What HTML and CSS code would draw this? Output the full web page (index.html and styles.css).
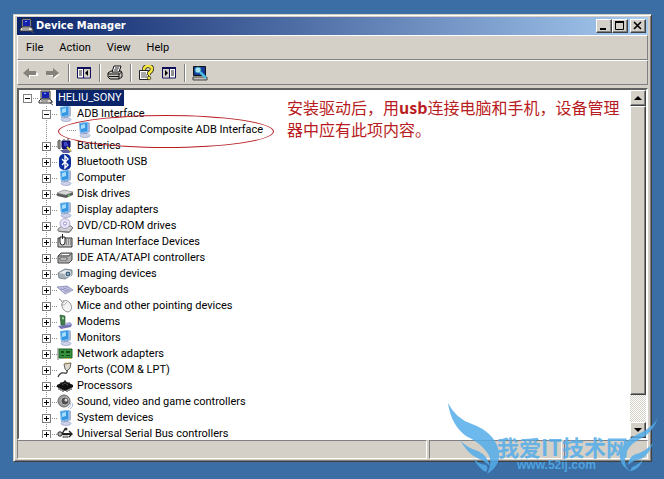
FILE: index.html
```html
<!DOCTYPE html>
<html lang="en">
<head>
    <meta charset="UTF-8">
    <title>Device Manager</title>
    <link rel="stylesheet" href="styles.css">
</head>
<body>
    <!-- icons -->
    <svg class="sprite">
        <symbol id="i-pc" viewBox="0 0 16 16">
            <path d="M3 1h9v8H3z" fill="#d4d0c8" stroke="#333"/>
            <path d="M4 2h7v6H4z" fill="#1420b0"/>
            <path d="M6 3h2v1H6z" fill="#7fb0ff"/>
            <path d="M1 11l2-2h9l2 2v2H1z" fill="#e4e0d8" stroke="#333"/>
            <path d="M3 11h7" stroke="#666"/>
            <path d="M12 9l2 3-2 1 3 2" stroke="#555" fill="none"/>
        </symbol>
        <symbol id="i-monitor" viewBox="0 0 16 16">
            <path d="M3 1l9-1 2 1v9l-2 1-8 1z" fill="#a9b6d6"/>
            <path d="M3 1l9-1v10l-8 1z" fill="#6fb8f0"/>
            <path d="M4 2l7-1v8l-6 1z" fill="#3596e4"/>
            <path d="M5 3l4-1v4l-4 1z" fill="#a5dcff"/>
            <path d="M7 11h4v2H7z" fill="#8793bd"/>
            <ellipse cx="9" cy="13.500" rx="5" ry="2" fill="#ccd3ea" stroke="#8d99bd" stroke-width=".6"/>
        </symbol>
        <symbol id="i-battery" viewBox="0 0 16 16">
            <path d="M1 3l2-1v9l-2-1z" fill="#aaa" stroke="#555"/>
            <path d="M5 3h8v6l-2 2H6L5 9z" fill="#16168c" stroke="#080850"/>
            <path d="M7 1v2M11 0v3" stroke="#777" stroke-width="1.400"/>
            <path d="M3 12h10l2 1-3 2H6z" fill="#5b5ba0"/>
            <path d="M10 9l4 4" stroke="#e0d048" stroke-width="2"/>
            <path d="M7 5h3M7 7h4" stroke="#6b7fff"/>
        </symbol>
        <symbol id="i-bluetooth" viewBox="0 0 16 16">
            <rect x="2" y="0" width="12" height="16" rx="5" fill="#0a2f9c"/>
            <path d="M5 5l6 6-3 3V2l3 3-6 6" fill="none" stroke="#fff" stroke-width="1.400"/>
        </symbol>
        <symbol id="i-disk" viewBox="0 0 16 16">
            <path d="M0 7l7-3 9 2v3l-7 3-9-2z" fill="#5c5c5c"/>
            <path d="M0 7l7-3 9 2-7 3z" fill="#d8d8d8" stroke="#888" stroke-width=".5"/>
            <path d="M11 10l2-1" stroke="#5f5"/>
        </symbol>
        <symbol id="i-dvd" viewBox="0 0 16 16">
            <path d="M1 11l4-3h9l2 2-4 4-11-1z" fill="#d0d0d4" stroke="#777"/>
            <path d="M2 13l10 1 3-4v2l-3 3-10-1z" fill="#777"/>
            <circle cx="8" cy="5.500" r="5" fill="#e5e2f6" stroke="#9690b8" stroke-width=".7"/>
            <circle cx="8" cy="5.500" r="1.500" fill="#fff" stroke="#8a7fc0" stroke-width=".8"/>
        </symbol>
        <symbol id="i-hid" viewBox="0 0 16 16">
            <path d="M1 4h14v9H1z" fill="#c8c8c8" stroke="#333"/>
            <path d="M9 6h5M9 8h5M9 10h5" stroke="#555" stroke-dasharray="1 1"/>
            <path d="M3 3v5q0 3 2.500 3T8 8V3z" fill="#fff" stroke="#222"/>
            <path d="M5.500 0v5" stroke="#222"/>
        </symbol>
        <symbol id="i-ide" viewBox="0 0 16 16">
            <path d="M1 6l3-3h11v7l-3 3H1z" fill="#b0b0b0" stroke="#444"/>
            <path d="M1 6h11l3-3" fill="none" stroke="#555"/>
            <path d="M5 4.500h7" stroke="#fff"/>
            <path d="M3 8h7v2H3z" fill="#fff" stroke="#333" stroke-width=".7"/>
        </symbol>
        <symbol id="i-camera" viewBox="0 0 16 16">
            <path d="M1 7l7-4 7 1v5l-7 4-6-1z" fill="#a8b1ba" stroke="#68737c" stroke-width=".8"/>
            <path d="M2 7l6-3 6 1-6 3z" fill="#e4e9ec"/>
            <circle cx="11" cy="8" r="3" fill="#49627c" stroke="#dfe6ea"/>
            <circle cx="11" cy="8" r="1" fill="#9ad0ee"/>
        </symbol>
        <symbol id="i-keyboard" viewBox="0 0 16 16">
            <path d="M0 5l10-1 6 4-8 4z" fill="#c8c8e6" stroke="#8284b0" stroke-width=".8"/>
            <path d="M3 6.500l8 3M6 5.500l7 3M4 8l7-3M7 10l6-3" stroke="#8688b8" stroke-width=".6"/>
        </symbol>
        <symbol id="i-mouse" viewBox="0 0 16 16">
            <path d="M2 1q2 0 3 3" fill="none" stroke="#888"/>
            <ellipse cx="9.500" cy="8.500" rx="4.500" ry="6" fill="#f4f4f4" stroke="#888" stroke-width=".8" transform="rotate(-28 9 8)"/>
            <path d="M4 7q4 1 6-3M7 5L6 2" fill="none" stroke="#999" stroke-width=".7"/>
        </symbol>
        <symbol id="i-modem" viewBox="0 0 16 16">
            <path d="M3 1l5 1v10l-4-1z" fill="#3f7d4a" stroke="#24512c" stroke-width=".6"/>
            <path d="M5 3l2 .5v2L5 5z" fill="#a4dba8"/>
            <path d="M1 12l6-1 8-1-1 3-10 2z" fill="#7274b4"/>
            <path d="M8 9l5-1 2 2-6 1z" fill="#a8a9da"/>
        </symbol>
        <symbol id="i-network" viewBox="0 0 16 16">
            <path d="M2 3h13v9H2z" fill="#36913d" stroke="#1d5f25"/>
            <path d="M1 2v12" stroke="#777"/>
            <path d="M4 5h3v2H4zM9 5h4v2H9zM4 9h3v1H4zM9 9h4v1H9z" fill="#144a1b"/>
            <path d="M7 12.500h7" stroke="#d8c648" stroke-dasharray="1 1"/>
        </symbol>
        <symbol id="i-port" viewBox="0 0 16 16">
            <path d="M7 2l7-1-1 5-3 3-2-2z" fill="#ddd8ce" stroke="#444" stroke-width=".8"/>
            <path d="M9 0v2M12 0v2" stroke="#caa93a"/>
            <path d="M10 8q1 4-3 3t-6 4" fill="none" stroke="#333" stroke-width="1.200"/>
        </symbol>
        <symbol id="i-cpu" viewBox="0 0 16 16">
            <path d="M0 7l8-4 8 4v2l-8 4-8-4z" fill="#111"/>
            <path d="M2 9v3M4 10v3M6 11v3M10 11v3M12 10v3M14 9v3M4 4v2M12 4v2M8 2v2" stroke="#222"/>
            <path d="M5 7l3-2 3 2" stroke="#777" fill="none" stroke-width=".6"/>
        </symbol>
        <symbol id="i-sound" viewBox="0 0 16 16">
            <circle cx="7" cy="7" r="6" fill="#9b9b9b" stroke="#666"/>
            <circle cx="8" cy="7" r="4" fill="#4e4e4e" stroke="#ccc" stroke-width=".8"/>
            <circle cx="9" cy="6" r="1.500" fill="#ddd"/>
            <path d="M11 14q3-2 3-6M13 15q3-2 3-6" fill="none" stroke="#91a5d4" stroke-width=".8"/>
        </symbol>
        <symbol id="i-usb" viewBox="0 0 16 16">
            <path d="M2 8h12" stroke="#222" stroke-width="2"/>
            <path d="M5 8l3-5h2M12 5l3 3-3 3" fill="none" stroke="#222" stroke-width="1.400"/>
            <circle cx="3" cy="8" r="2.200" fill="#bbb" stroke="#222"/>
            <circle cx="9" cy="3" r="1.500" fill="#333"/>
            <path d="M6 10h5v2H6z" fill="#bbb" stroke="#444" stroke-width=".6"/>
        </symbol>
    </svg>

    <main class="window">
        <header class="titlebar">
            <svg class="icon"><use href="#i-pc"/></svg>
            <h1>Device Manager</h1>
            <button type="button" class="raised" aria-label="Minimize"><svg viewBox="0 0 12 10"><path d="M2 8h6" stroke="#000" stroke-width="2"/></svg></button>
            <button type="button" class="raised" aria-label="Maximize"><svg viewBox="0 0 12 10"><path d="M1.500 1v7.500h8V1M1 1h9" fill="none" stroke="#000"/><path d="M1 1h9" stroke="#000" stroke-width="2"/></svg></button>
            <button type="button" class="raised close" aria-label="Close"><svg viewBox="0 0 12 10"><path d="M2 1l7 7M9 1L2 8" stroke="#000" stroke-width="1.600"/></svg></button>
        </header>

        <nav class="menu">
            <button type="button">File</button>
            <button type="button">Action</button>
            <button type="button">View</button>
            <button type="button">Help</button>
        </nav>

        <div class="toolbar">
            <button type="button" aria-label="Back"><svg class="icon" viewBox="0 0 16 16"><path d="M3 9l5 5v-3h8V8" fill="#fff"/><path d="M1 8l6-5v3h7v4H7v3z" fill="#85827c"/></svg></button>
            <button type="button" aria-label="Forward"><svg class="icon" viewBox="0 0 16 16"><path d="M2 11h7v3l6-5" fill="#fff"/><path d="M14 8L8 3v3H1v4h7v3z" fill="#85827c"/></svg></button>
            <span class="sep"></span>
            <button type="button" aria-label="Show console tree"><svg class="icon" viewBox="0 0 16 16"><path d="M1.500 3h13v10h-13z" fill="#fff" stroke="#10105a"/><path d="M1 3h14" stroke="#10105a" stroke-width="2"/><path d="M7.500 3v10" stroke="#10105a"/><path d="M8 4h6v8H8z" fill="#d4d0c8"/><path d="M3 6h3M3 8h3M3 10h3" stroke="#222"/><path d="M12 5v6L9 8z" fill="#000"/></svg></button>
            <span class="sep"></span>
            <button type="button" aria-label="Print"><svg class="icon" viewBox="0 0 16 16"><path d="M1 8l3-2h10l1 2v4l-3 2H3l-2-2z" fill="#ccc8c0" stroke="#111"/><path d="M5 7l2-6h7l-2 6z" fill="#fff" stroke="#111"/><path d="M8 3h4M7 5h4" stroke="#222"/><path d="M1 9h11l3-2M2 11.500h10M12 9v5" fill="none" stroke="#111"/></svg></button>
            <span class="sep"></span>
            <button type="button" aria-label="Help"><svg class="icon" viewBox="0 0 16 16"><path d="M1.500 5.500h9v9h-9z" fill="#fff" stroke="#222"/><path d="M3 8h5M3 10h6M3 12h6" stroke="#555"/><path d="M6 5q0-4 4-4t4 3q0 2-3 4v2" fill="none" stroke="#222" stroke-width="4"/><path d="M6 5q0-4 4-4t4 3q0 2-3 4v2" fill="none" stroke="#f5e63c" stroke-width="2.500"/><circle cx="11" cy="13" r="1.800" fill="#f5e63c" stroke="#222" stroke-width=".7"/></svg></button>
            <button type="button" aria-label="Show action pane"><svg class="icon" viewBox="0 0 16 16"><path d="M1.500 3h13v10h-13z" fill="#fff" stroke="#10105a"/><path d="M1 3h14" stroke="#10105a" stroke-width="2"/><path d="M2 4h6v8H2z" fill="#d4d0c8"/><path d="M8.500 3v10" stroke="#10105a"/><path d="M10 6h3M10 8h3M10 10h3" stroke="#222"/><path d="M4 5v6l3-3z" fill="#000"/></svg></button>
            <span class="sep"></span>
            <button type="button" aria-label="Scan for hardware changes"><svg class="icon" viewBox="0 0 16 16"><path d="M1.500 1.500h12v9h-12z" fill="#123a9a" stroke="#111"/><path d="M1 12h14v3H1z" fill="#c4c0b8" stroke="#222" stroke-width=".8"/><circle cx="6" cy="5" r="3" fill="#9fe0f5" stroke="#3b8fb4"/><path d="M8 7l6 6" stroke="#4bbbe0" stroke-width="2.500"/></svg></button>
        </div>

        <section class="pane">
            <ul class="tree">
                <li>
                    <div class="row root"><button type="button" class="toggle open" aria-label="Collapse"></button><i class="dots"></i><svg class="icon"><use href="#i-pc"/></svg><span class="label selected">HELIU_SONY</span></div>
                    <ul>
                        <li>
                            <div class="row"><button type="button" class="toggle open" aria-label="Collapse"></button><i class="dots"></i><svg class="icon"><use href="#i-monitor"/></svg><span class="label">ADB Interface</span></div>
                            <ul class="leaf">
                                <li><div class="row"><i class="dots"></i><svg class="icon"><use href="#i-monitor"/></svg><span class="label">Coolpad Composite ADB Interface</span></div></li>
                            </ul>
                        </li>
                        <li class="row"><button type="button" class="toggle" aria-label="Expand"></button><i class="dots"></i><svg class="icon"><use href="#i-battery"/></svg><span class="label">Batteries</span></li>
                        <li class="row"><button type="button" class="toggle" aria-label="Expand"></button><i class="dots"></i><svg class="icon"><use href="#i-bluetooth"/></svg><span class="label">Bluetooth USB</span></li>
                        <li class="row"><button type="button" class="toggle" aria-label="Expand"></button><i class="dots"></i><svg class="icon"><use href="#i-monitor"/></svg><span class="label">Computer</span></li>
                        <li class="row"><button type="button" class="toggle" aria-label="Expand"></button><i class="dots"></i><svg class="icon"><use href="#i-disk"/></svg><span class="label">Disk drives</span></li>
                        <li class="row"><button type="button" class="toggle" aria-label="Expand"></button><i class="dots"></i><svg class="icon"><use href="#i-monitor"/></svg><span class="label">Display adapters</span></li>
                        <li class="row"><button type="button" class="toggle" aria-label="Expand"></button><i class="dots"></i><svg class="icon"><use href="#i-dvd"/></svg><span class="label">DVD/CD-ROM drives</span></li>
                        <li class="row"><button type="button" class="toggle" aria-label="Expand"></button><i class="dots"></i><svg class="icon"><use href="#i-hid"/></svg><span class="label">Human Interface Devices</span></li>
                        <li class="row"><button type="button" class="toggle" aria-label="Expand"></button><i class="dots"></i><svg class="icon"><use href="#i-ide"/></svg><span class="label">IDE ATA/ATAPI controllers</span></li>
                        <li class="row"><button type="button" class="toggle" aria-label="Expand"></button><i class="dots"></i><svg class="icon"><use href="#i-camera"/></svg><span class="label">Imaging devices</span></li>
                        <li class="row"><button type="button" class="toggle" aria-label="Expand"></button><i class="dots"></i><svg class="icon"><use href="#i-keyboard"/></svg><span class="label">Keyboards</span></li>
                        <li class="row"><button type="button" class="toggle" aria-label="Expand"></button><i class="dots"></i><svg class="icon"><use href="#i-mouse"/></svg><span class="label">Mice and other pointing devices</span></li>
                        <li class="row"><button type="button" class="toggle" aria-label="Expand"></button><i class="dots"></i><svg class="icon"><use href="#i-modem"/></svg><span class="label">Modems</span></li>
                        <li class="row"><button type="button" class="toggle" aria-label="Expand"></button><i class="dots"></i><svg class="icon"><use href="#i-monitor"/></svg><span class="label">Monitors</span></li>
                        <li class="row"><button type="button" class="toggle" aria-label="Expand"></button><i class="dots"></i><svg class="icon"><use href="#i-network"/></svg><span class="label">Network adapters</span></li>
                        <li class="row"><button type="button" class="toggle" aria-label="Expand"></button><i class="dots"></i><svg class="icon"><use href="#i-port"/></svg><span class="label">Ports (COM &amp; LPT)</span></li>
                        <li class="row"><button type="button" class="toggle" aria-label="Expand"></button><i class="dots"></i><svg class="icon"><use href="#i-cpu"/></svg><span class="label">Processors</span></li>
                        <li class="row"><button type="button" class="toggle" aria-label="Expand"></button><i class="dots"></i><svg class="icon"><use href="#i-sound"/></svg><span class="label">Sound, video and game controllers</span></li>
                        <li class="row"><button type="button" class="toggle" aria-label="Expand"></button><i class="dots"></i><svg class="icon"><use href="#i-monitor"/></svg><span class="label">System devices</span></li>
                        <li class="row"><button type="button" class="toggle" aria-label="Expand"></button><i class="dots"></i><svg class="icon"><use href="#i-usb"/></svg><span class="label">Universal Serial Bus controllers</span></li>
                    </ul>
                </li>
            </ul>
            <div class="scrollbar">
                <button type="button" class="raised" aria-label="Scroll up"><svg viewBox="0 0 12 12"><path d="M2 8h8L6 4z"/></svg></button>
                <div class="raised thumb"></div>
                <button type="button" class="raised" aria-label="Scroll down"><svg viewBox="0 0 12 12"><path d="M2 4h8L6 8z"/></svg></button>
            </div>
            <span class="circle"></span>
            <p class="note" lang="zh">安装驱动后，用<b>usb</b>连接电脑和手机，设备管理<br>器中应有此项内容。</p>
        </section>

        <footer class="status">
            <span></span><span></span><span></span>
        </footer>
    </main>

    <svg class="watermark" viewBox="0 0 212 79" lang="zh">
        <g fill="#54adea">
            <path d="M0 3Q8 19 24 24Q45 32 50 48Q55 64 39 74Q46 60 38 51Q31 42 18 36Q3 25 0 3z"/>
            <path d="M12 40Q19 48 30 51Q40 56 42 66Q35 60 29 58Q20 54 12 40z"/>
            <path d="M25 58Q30 64 38 65Q41 68 38 72Q31 69 25 58z"/>
            <path d="M210 18Q204 34 192 39Q178 46 177 58Q176 68 184 72Q170 66 172 52Q175 41 190 34Q204 28 210 18z"/>
            <path d="M205 43Q197 52 188 54Q180 57 180 65Q186 60 193 59Q201 55 205 43z"/>
            <path d="M195 60Q188 66 184 67L182 71Q190 71 195 60z"/>
        </g>
        <text x="49" y="56" class="mark-name">我爱IT技术网</text>
        <text x="69" y="69" class="mark-url">www.52ij.com</text>
    </svg>
</body>
</html>
```
FILE: styles.css
```css
* {
    box-sizing: border-box;
}

body {
    margin: 0;
    padding: 14px 12px 17px 13px;
    height: 100vh;
    display: flex;
    position: relative;
    overflow: hidden;
    background: #3a6ea5;
    color: #000;
    font-family: Roboto, "Liberation Sans", sans-serif;
    font-size: 11px;
    line-height: 16px;
}

button {
    margin: 0;
    padding: 0;
    border: none;
    background: none;
    font: inherit;
    color: inherit;
}

ul {
    list-style: none;
    margin: 0;
    padding: 0;
}

.sprite {
    display: none;
}

.icon {
    display: block;
    flex: none;
    width: 16px;
    height: 16px;
}

.window {
    flex: 1;
    min-width: 0;
    display: flex;
    flex-direction: column;
    padding: 2px;
    border: 1px solid #d4d0c8;
    border-right-color: #404040;
    border-bottom-color: #404040;
    box-shadow: inset 1px 1px #fff, inset -1px -1px #808080;
    background: #d4d0c8;
}

.raised {
    display: flex;
    align-items: center;
    justify-content: center;
    background: #d4d0c8;
    border: 1px solid #fff;
    border-right-color: #404040;
    border-bottom-color: #404040;
    box-shadow: inset -1px -1px #808080;
}

.titlebar {
    display: flex;
    align-items: center;
    height: 18px;
    margin: 0 1px;
    padding: 0 2px;
    background: linear-gradient(to right, #0a246a, #a6caf0);
}

.titlebar h1 {
    flex: 1;
    margin: 0 0 0 1px;
    font-family: "DejaVu Sans Condensed", sans-serif;
    font-size: 11px;
    color: #fff;
}

.titlebar .raised {
    width: 16px;
    height: 14px;
}

.titlebar .raised svg {
    width: 12px;
    height: 10px;
}

.titlebar .close {
    margin-left: 2px;
}

.menu,
.toolbar {
    display: flex;
    align-items: center;
    height: 25px;
    margin: 0 1px;
    border: 1px solid #fff;
    border-right-color: #808080;
    border-bottom-color: #808080;
}

.menu {
    gap: 16px;
    padding-left: 8px;
}

.toolbar {
    gap: 7px;
    padding-left: 4px;
}

.sep {
    width: 1px;
    height: 18px;
    background: #808080;
    box-shadow: 1px 0 #fff;
}

.pane {
    flex: 1;
    min-height: 0;
    display: flex;
    position: relative;
    margin: 3px 1px 0;
    border: 2px solid;
    border-color: #606060 #fff #fff #606060;
    background: #fff;
}

.tree {
    flex: 1;
    overflow: hidden;
}

.tree ul {
    margin-left: 19px;
    background: repeating-linear-gradient(#909090 0 1px, #fff 1px 2px) 8px 0 / 1px 100% no-repeat;
}

.tree .leaf {
    background: none;
}

.row {
    display: flex;
    align-items: center;
    height: 16px;
    padding-left: 4px;
}

.leaf .row {
    padding-left: 9px;
}

.toggle {
    width: 9px;
    height: 9px;
    border: 1px solid #808080;
    background:
        linear-gradient(#000, #000) center / 5px 1px no-repeat,
        linear-gradient(#000, #000) center / 1px 5px no-repeat,
        #fff;
}

.toggle.open {
    background: linear-gradient(#000, #000) center / 5px 1px no-repeat, #fff;
}

.dots {
    width: 6px;
    height: 1px;
    background: repeating-linear-gradient(to right, #fff 0 1px, #909090 1px 2px);
}

.leaf .dots {
    width: 10px;
}

.label {
    margin-left: 2px;
    padding: 0 2px;
    white-space: nowrap;
}

.selected {
    background: #0a246a;
    color: #fff;
}

.scrollbar {
    display: flex;
    flex-direction: column;
    width: 16px;
    background: repeating-conic-gradient(#fff 0 25%, #d4d0c8 0 50%) 0 0 / 2px 2px;
}

.scrollbar button {
    height: 16px;
}

.scrollbar button svg {
    width: 12px;
    height: 12px;
}

.thumb {
    flex: 1;
    margin-bottom: 27px;
}

/* red marks over the tree */
.circle {
    position: absolute;
    left: 39px;
    top: 25px;
    width: 216px;
    height: 33px;
    border: 1px solid #b81c22;
    border-radius: 50%;
}

.note {
    position: absolute;
    left: 268px;
    top: 6px;
    margin: 0;
    color: #b81c22;
    font-family: "Noto Sans CJK SC", sans-serif;
    font-size: 16px;
    line-height: 22px;
    white-space: nowrap;
}

.status {
    display: grid;
    grid-template-columns: 1fr 133px 84px;
    gap: 2px;
    height: 19px;
    margin: 0 1px;
}

.status span {
    border: 1px solid #808080;
    border-right-color: #fff;
    border-bottom-color: #fff;
}

.watermark {
    position: absolute;
    right: 4px;
    bottom: 0;
    width: 212px;
    height: 79px;
    opacity: 0.85;
}

.watermark text {
    fill: #54adea;
    font-family: "Noto Sans CJK SC", sans-serif;
    font-weight: bold;
}

.mark-name {
    font-size: 22px;
}

.watermark .mark-url {
    font-family: "Liberation Sans", sans-serif;
    font-size: 12px;
}
```
